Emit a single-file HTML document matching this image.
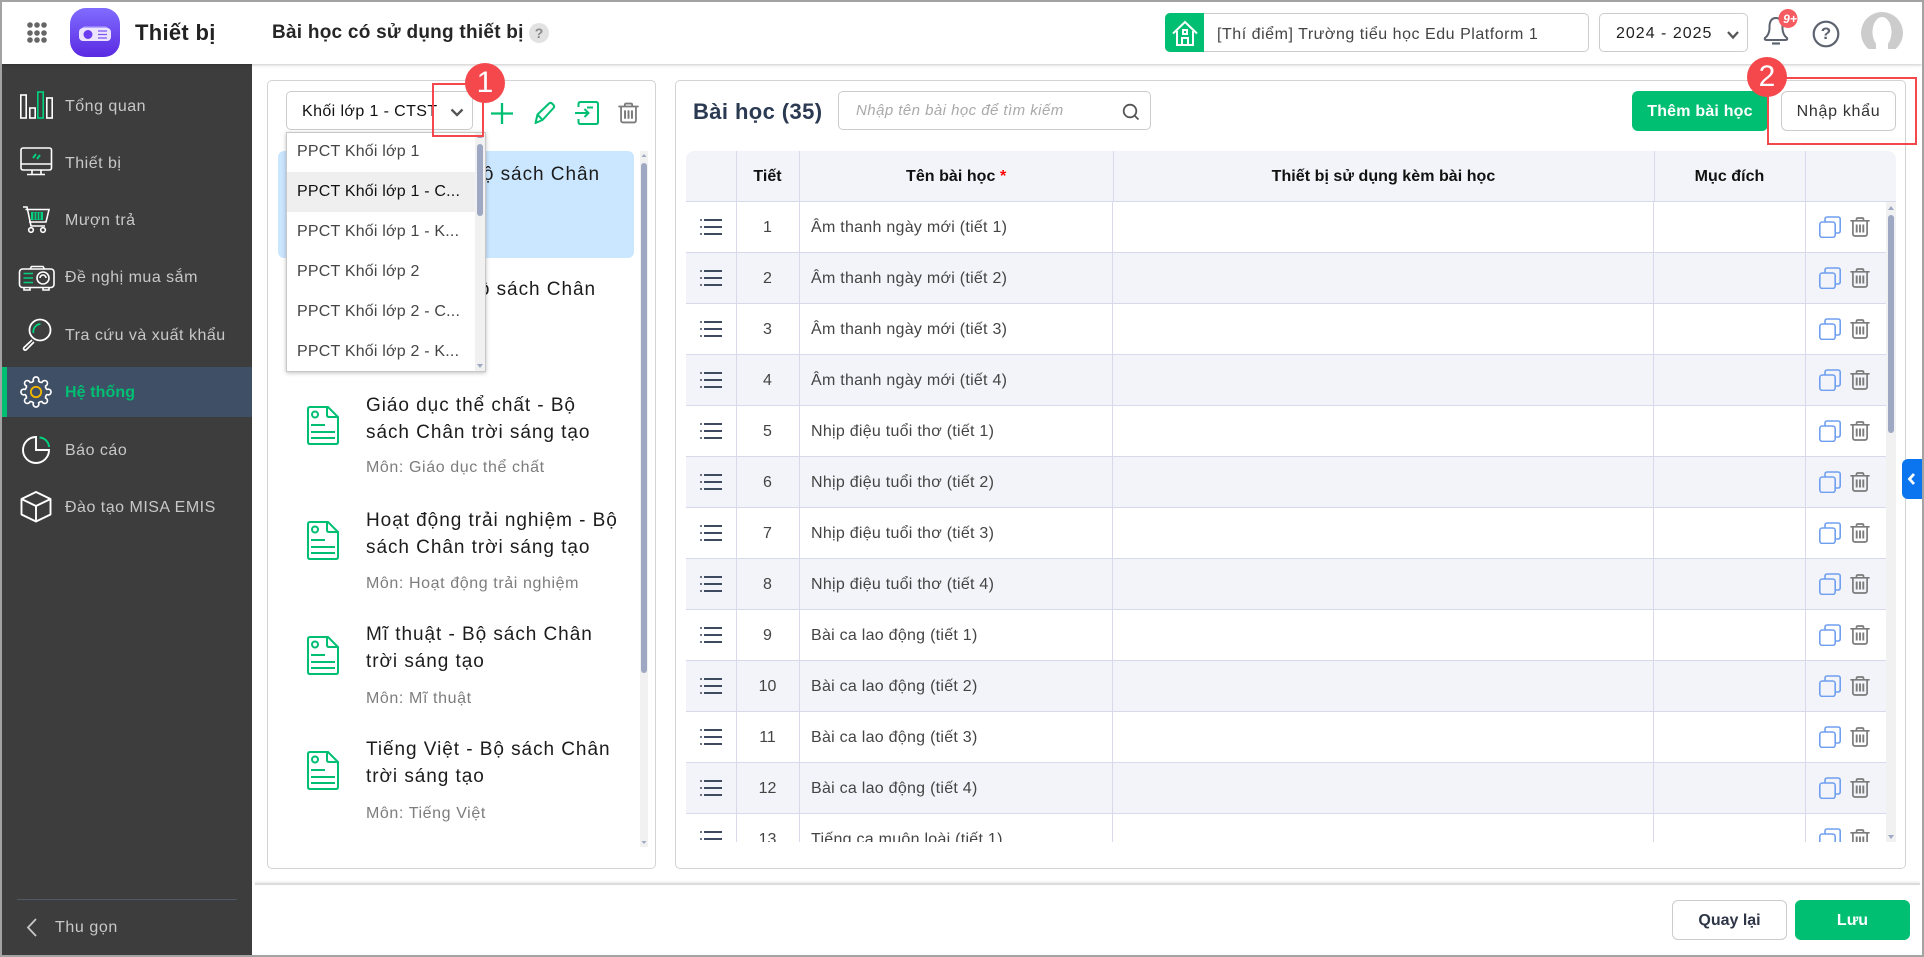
<!DOCTYPE html>
<html lang="vi"><head><meta charset="utf-8"><title>Thiết bị</title>
<style>
html,body{margin:0;padding:0;width:1924px;height:957px;overflow:hidden;background:#fff;font-family:"Liberation Sans","Noto Sans CJK SC",sans-serif;color:#333}
.a{position:absolute}
.t{position:absolute;white-space:nowrap;line-height:20px;font-size:16px}
svg{position:absolute;overflow:visible}
.side{color:#c8c8c8;letter-spacing:.5px;left:65px}
.tt{left:366px;font-size:19px;letter-spacing:.95px;color:#1c1c1c;line-height:24px}
.mon{left:366px;color:#7d7d7d;letter-spacing:.6px}
.dd{left:297px;letter-spacing:.2px;color:#444}
.btn{position:absolute;box-sizing:border-box;border-radius:6px;text-align:center;font-size:16px}
.row{position:absolute;left:0;width:1200px;height:51px;box-sizing:border-box;border-bottom:1.5px solid #d8daec}
.row.e{background:#f3f4f9}
.row .n{position:absolute;left:50px;width:63px;text-align:center;top:16px;line-height:20px;font-size:16px;color:#444}
.row .m{position:absolute;left:125px;top:16px;line-height:20px;font-size:16px;letter-spacing:.27px;color:#444;white-space:nowrap}
.th{position:absolute;top:167px;line-height:20px;font-size:16px;font-weight:bold;color:#111;white-space:nowrap;letter-spacing:.05px;text-align:center}
.v{position:absolute;width:1px;background:#d8daec}
</style></head>
<body>
<svg width="0" height="0" style="position:absolute">
<defs>
<symbol id="trash" viewBox="0 0 20 20"><g fill="none" stroke="#7b7b7b" stroke-width="1.7" stroke-linecap="round"><path d="M1 3.8H19"/><path d="M6.5 3.5V2.2Q6.5 1 7.7 1H12.300Q13.500 1 13.500 2.200V3.500"/><path d="M2.900 4.500V16.800Q2.900 19 5.100 19H14.900Q17.100 19 17.100 16.800V4.500"/><path d="M6.700 7.500V15.500M10 7.500V15.500M13.300 7.500V15.500" stroke-linecap="butt" stroke-width="1.900"/></g></symbol>
<symbol id="copy" viewBox="0 0 22 22"><g fill="none" stroke="#6f9ff0" stroke-width="1.600"><rect x=".8" y="6" width="15.400" height="15.400" rx="2.500"/><path d="M6 5.500V3.200Q6 1 8.200 1H19Q21.200 1 21.200 3.200V14.800Q21.200 17 19 17H16.800"/></g></symbol>
<symbol id="list" viewBox="0 0 22 16"><g fill="#3e4a5f"><rect x="4" y="0" width="18" height="2"/><rect x="4" y="7" width="18" height="2"/><rect x="4" y="14" width="18" height="2"/><circle cx="1" cy="1" r="1"/><circle cx="1" cy="8" r="1"/><circle cx="1" cy="15" r="1"/></g></symbol>
<symbol id="doc" viewBox="0 0 32 39"><g fill="none" stroke="#00bf72" stroke-width="2"><path d="M3 1H21L31 11V36Q31 38 29 38H3Q1 38 1 36V3Q1 1 3 1Z"/><path d="M20 1V9Q20 11 22 11H31"/><circle cx="8" cy="8.500" r="3"/><path d="M4 19H18M4 26H28M4 32H28"/></g></symbol>
</defs>
</svg>

<!-- Header -->
<div class="a" style="left:2px;top:2px;width:1920px;height:62px;background:#fff;box-shadow:0 1px 3px rgba(0,0,0,.22);z-index:2"></div>
<div class="a" style="left:70px;top:8px;width:50px;height:49px;border-radius:16px;background:linear-gradient(180deg,#806cff,#5a2ae2);z-index:3"></div>
<svg style="left:0;top:0;z-index:4" width="130" height="64">
<g fill="#666"><circle cx="30" cy="25" r="2.800"/><circle cx="37" cy="25" r="2.800"/><circle cx="44" cy="25" r="2.800"/><circle cx="30" cy="33" r="2.800"/><circle cx="37" cy="33" r="2.800"/><circle cx="44" cy="33" r="2.800"/><circle cx="30" cy="40" r="2.800"/><circle cx="37" cy="40" r="2.800"/><circle cx="44" cy="40" r="2.800"/></g>
<rect x="79" y="28" width="32" height="13" rx="4" fill="#ece4ff"/><path d="M84 26.500H106L108 28H82Z" fill="#b9a8ff"/><circle cx="88" cy="34.500" r="4.500" fill="#6a3df0"/><path d="M98 31H107M98 34.500H107M98 38H107" stroke="#7a55f0" stroke-width="1.300"/>
</svg>
<div class="t" style="left:135px;top:23px;font-size:22px;font-weight:bold;letter-spacing:.3px;color:#222;z-index:4">Thiết bị</div>
<div class="t" style="left:272px;top:23px;font-size:19px;font-weight:bold;letter-spacing:.25px;color:#262626;z-index:4">Bài học có sử dụng thiết bị</div>
<div class="a" style="left:529px;top:23px;width:20px;height:20px;border-radius:50%;background:#e2e2e2;color:#8a8a8a;text-align:center;line-height:20px;font-size:14px;font-weight:bold;z-index:4">?</div>

<div class="a" style="left:1165px;top:13px;width:424px;height:39px;box-sizing:border-box;border:1px solid #ccc;border-radius:5px;z-index:4"></div>
<div class="a" style="left:1165px;top:13px;width:39px;height:39px;background:#00bf72;border-radius:5px 0 0 5px;z-index:4"></div>
<svg style="left:1165px;top:13px;z-index:5" width="39" height="39"><g fill="none" stroke="#fff" stroke-width="2"><path d="M8 20.500L20 9L32 20.500"/><path d="M12 18V32H28V18"/><path d="M17 32V25H23V32"/><rect x="18" y="17" width="4" height="4"/></g></svg>
<div class="t" style="left:1217px;top:25px;letter-spacing:.53px;color:#444;z-index:5">[Thí điểm] Trường tiểu học Edu Platform 1</div>
<div class="a" style="left:1599px;top:13px;width:149px;height:39px;box-sizing:border-box;border:1px solid #ccc;border-radius:5px;z-index:4"></div>
<div class="t" style="left:1616px;top:24px;letter-spacing:1px;color:#222;z-index:5">2024 - 2025</div>
<svg style="left:1720px;top:25px;z-index:5" width="26" height="20"><path d="M8 7L13 12.500L18 7" fill="none" stroke="#555" stroke-width="2.300"/></svg>

<svg style="left:1755px;top:5px;z-index:5" width="165" height="55">
<g fill="none" stroke="#5d6470" stroke-width="2"><path d="M10 33Q14 30 14.500 24V21Q15 13 21 13Q27 13 27.500 21V24Q28 30 32 33Q33 35 30 35H12Q9 35 10 33Z"/><path d="M17 38.500H25" stroke-width="2.200"/></g>
<circle cx="33" cy="13.500" r="9.500" fill="#f55b60"/>
<circle cx="71" cy="29" r="12.300" fill="none" stroke="#5d6470" stroke-width="2.200"/>
<circle cx="127" cy="28" r="21" fill="#ccc"/>
<ellipse cx="127" cy="27" rx="9.500" ry="15" fill="#fff"/>
<rect x="121" y="30" width="12" height="16" fill="#fff"/>
<rect x="104" y="44" width="46" height="8" fill="#fff"/>
</svg>
<div class="t" style="left:1780px;top:9px;width:20px;text-align:center;font-size:12px;font-weight:bold;font-style:italic;color:#fff;z-index:6">9+</div>
<div class="t" style="left:1816px;top:24px;width:20px;text-align:center;font-size:17px;font-weight:bold;color:#5d6470;z-index:6">?</div>

<!-- Sidebar -->
<div class="a" style="left:2px;top:64px;width:250px;height:891px;background:#3d3d3d"></div>
<div class="a" style="left:2px;top:367px;width:250px;height:50px;background:#3f4f65"></div>
<div class="a" style="left:2px;top:367px;width:5px;height:50px;background:#00bf72"></div>
<div class="t side" style="top:97px">Tổng quan</div>
<div class="t side" style="top:154px">Thiết bị</div>
<div class="t side" style="top:211px">Mượn trả</div>
<div class="t side" style="top:268px">Đề nghị mua sắm</div>
<div class="t side" style="top:326px">Tra cứu và xuất khẩu</div>
<div class="t side" style="top:383px;color:#00bf72;font-weight:bold;letter-spacing:.1px">Hệ thống</div>
<div class="t side" style="top:441px">Báo cáo</div>
<div class="t side" style="top:498px">Đào tạo MISA EMIS</div>
<div class="a" style="left:17px;top:899px;width:220px;height:1px;background:#50586a"></div>
<div class="t side" style="left:55px;top:918px;letter-spacing:.6px">Thu gọn</div>

<svg style="left:0;top:0" width="252" height="957">
<g fill="none" stroke="#fff" stroke-width="1.600">
<rect x="20.800" y="95" width="5.400" height="23"/><rect x="29.800" y="108" width="5.400" height="10"/><rect x="46.800" y="98" width="5.400" height="20"/>
<rect x="37.800" y="92" width="5.400" height="26" stroke="#00d27e"/>
<rect x="21" y="148" width="30.500" height="22" rx="2"/><path d="M21 164H51.500M32 170V174M41 170V174M27 174.500H45"/>
<path d="M33 158L36 154M37 159L40 155" stroke="#00d27e" stroke-width="2"/>
<path d="M23 207H27L31 226H45M25.500 209.500H49L46 222H29"/>
<rect x="31" y="212" width="12" height="8" fill="#00d27e" stroke="none"/><path d="M34 212.500V219.500M37 212.500V219.500M40 212.500V219.500" stroke="#3d3d3d" stroke-width="1.300"/>
<circle cx="31" cy="230" r="2.300"/><circle cx="43" cy="230" r="2.300"/>
<rect x="19.500" y="269" width="34.500" height="18.500" rx="3"/><path d="M30 269L31.500 266.500H43L44.500 269M24 288V290H30V288M43 288V290H49V288"/>
<path d="M23.500 273.500H33M23.500 278H33M23.500 282.500H33" stroke="#00d27e" stroke-width="1.500"/>
<circle cx="43" cy="278" r="6"/><path d="M40 278A3 3 0 0 1 46 278" />
<circle cx="40" cy="330" r="10.500" stroke-width="1.800"/><path d="M33.500 333A7.500 7.500 0 0 1 40.500 324" stroke="#00d27e" stroke-width="1.800"/>
<path d="M32 340L24 347.500Q23 349 24.500 350Q25.500 350.500 26.500 349.500L34 342" stroke-width="1.700"/>
<g transform="translate(36 392) scale(.94)" stroke-width="1.700"><path d="M11.690 -2.700A3 3 0 1 1 11.690 2.700A4 4 0 0 0 10.180 6.360A3 3 0 1 1 6.360 10.180A4 4 0 0 0 2.700 11.690A3 3 0 1 1 -2.700 11.690A4 4 0 0 0 -6.360 10.180A3 3 0 1 1 -10.180 6.360A4 4 0 0 0 -11.690 2.700A3 3 0 1 1 -11.690 -2.700A4 4 0 0 0 -10.180 -6.360A3 3 0 1 1 -6.360 -10.180A4 4 0 0 0 -2.700 -11.690A3 3 0 1 1 2.700 -11.690A4 4 0 0 0 6.360 -10.180A3 3 0 1 1 10.180 -6.360A4 4 0 0 0 11.690 -2.700Z"/><circle r="5.500" stroke="#f0b400" stroke-width="2"/></g>
<path d="M36 437V450H49A13 13 0 1 1 36 437Z" stroke-width="1.900"/><path d="M39.500 437.500A10 10 0 0 1 49 447" stroke="#00d27e" stroke-width="1.900"/>
<path d="M36 492L50.500 499V514.500L36 521.500L21.500 514.500V499ZM21.500 499L36 506L50.500 499M36 506V521.500" stroke-width="1.900" stroke-linejoin="round"/>
<path d="M36 919L28 927.500L36 936" stroke="#c8c8c8" stroke-width="1.800"/>
</g>
</svg>

<!-- Left panel -->
<div class="a" style="left:267px;top:80px;width:389px;height:789px;box-sizing:border-box;border:1px solid #d3d3d3;border-radius:5px"></div>
<div class="a" style="left:286px;top:91px;width:187px;height:39px;box-sizing:border-box;border:1px solid #ccc;border-radius:5px"></div>
<div class="t" style="left:302px;top:102px;letter-spacing:.4px;color:#111">Khối lớp 1 - CTST</div>
<svg style="left:445px;top:103px" width="24" height="20"><path d="M6.500 6.500L12 12L17.500 6.500" fill="none" stroke="#555" stroke-width="2.300"/></svg>
<svg style="left:0;top:0" width="660" height="140">
<path d="M502 103V124M491 113.500H513" stroke="#00bf72" stroke-width="2.300" fill="none"/>
<path d="M535.500 123L537.500 114.500L549 103.500Q550.500 102.200 552 103.500L553.500 105Q554.800 106.500 553.500 108L542.500 120ZM537.500 114.500L542.500 120" fill="none" stroke="#00bf72" stroke-width="2" stroke-linejoin="round"/>
<path d="M578.500 107V104Q578.500 102 580.500 102H596Q598 102 598 104V122Q598 124 596 124H580.500Q578.500 124 578.500 122V119M575 113H588.500M584.500 109L588.500 113L584.500 117M587 107.500H593" fill="none" stroke="#00bf72" stroke-width="2"/>
</svg>
<svg style="left:618px;top:102px" width="21" height="22"><use href="#trash" width="21" height="22"/></svg>

<div class="a" style="left:278px;top:151px;width:356px;height:107px;background:#cbe6ff;border-radius:6px"></div>
<div class="t tt" style="left:auto;right:1324px;top:163px">Âm nhạc - Bộ sách Chân</div>
<div class="t tt" style="top:190px">trời sáng tạo</div>
<div class="t mon" style="top:227px">Môn: Âm nhạc</div>
<div class="t tt" style="left:auto;right:1328px;top:278px">Đạo đức - Bộ sách Chân</div>
<div class="t tt" style="top:305px">trời sáng tạo</div>
<div class="t mon" style="top:342px">Môn: Đạo đức</div>

<svg style="left:307px;top:406px" width="32" height="39"><use href="#doc" width="32" height="39"/></svg>
<div class="t tt" style="top:394px">Giáo dục thể chất - Bộ</div>
<div class="t tt" style="top:421px">sách Chân trời sáng tạo</div>
<div class="t mon" style="top:458px">Môn: Giáo dục thể chất</div>

<svg style="left:307px;top:521px" width="32" height="39"><use href="#doc" width="32" height="39"/></svg>
<div class="t tt" style="top:509px">Hoạt động trải nghiệm - Bộ</div>
<div class="t tt" style="top:536px">sách Chân trời sáng tạo</div>
<div class="t mon" style="top:574px">Môn: Hoạt động trải nghiệm</div>

<svg style="left:307px;top:636px" width="32" height="39"><use href="#doc" width="32" height="39"/></svg>
<div class="t tt" style="top:623px">Mĩ thuật - Bộ sách Chân</div>
<div class="t tt" style="top:650px">trời sáng tạo</div>
<div class="t mon" style="top:689px">Môn: Mĩ thuật</div>

<svg style="left:307px;top:751px" width="32" height="39"><use href="#doc" width="32" height="39"/></svg>
<div class="t tt" style="top:738px">Tiếng Việt - Bộ sách Chân</div>
<div class="t tt" style="top:765px">trời sáng tạo</div>
<div class="t mon" style="top:804px">Môn: Tiếng Việt</div>

<div class="a" style="left:640px;top:151px;width:8px;height:696px;background:#f1f1f1"></div>
<div class="a" style="left:641px;top:163px;width:6px;height:510px;background:#9ea8c2;border-radius:3px"></div>
<svg style="left:640px;top:151px" width="8" height="696"><path d="M1.500 6L4 3L6.500 6ZM1.500 690L4 693L6.500 690Z" fill="#9ea8c2"/></svg>

<!-- Right panel -->
<div class="a" style="left:675px;top:80px;width:1231px;height:789px;box-sizing:border-box;border:1px solid #d3d3d3;border-radius:5px"></div>
<div class="t" style="left:693px;top:102px;font-size:22px;font-weight:bold;letter-spacing:.4px;color:#2b3a52">Bài học (35)</div>
<div class="a" style="left:838px;top:91px;width:313px;height:39px;box-sizing:border-box;border:1px solid #ccc;border-radius:5px"></div>
<div class="t" style="left:856px;top:101px;font-size:15px;font-style:italic;letter-spacing:.45px;color:#a9a9a9">Nhập tên bài học để tìm kiếm</div>
<svg style="left:1122px;top:103px" width="18" height="18"><circle cx="8" cy="8" r="6.300" fill="none" stroke="#555" stroke-width="1.800"/><path d="M12.500 12.500L16.500 16.500" stroke="#555" stroke-width="1.800"/></svg>

<div class="btn" style="left:1632px;top:91px;width:136px;height:40px;background:#00bf72;color:#fff;font-weight:bold;line-height:41px;letter-spacing:.2px">Thêm bài học</div>
<div class="btn" style="left:1781px;top:91px;width:115px;height:40px;border:1px solid #ccc;line-height:39px;letter-spacing:.7px;color:#333">Nhập khẩu</div>

<!-- Table -->
<div class="a" style="left:686px;top:151px;width:1210px;height:51px;background:#f3f4f9;border-radius:8px 8px 0 0;box-sizing:border-box;border-bottom:1.5px solid #d8daec"></div>
<div class="v" style="left:736px;top:151px;height:51px"></div>
<div class="v" style="left:799px;top:151px;height:51px"></div>
<div class="v" style="left:1113px;top:151px;height:51px"></div>
<div class="v" style="left:1654px;top:151px;height:51px"></div>
<div class="v" style="left:1805px;top:151px;height:51px"></div>
<div class="th" style="left:736px;width:63px">Tiết</div>
<div class="th" style="left:906px;text-align:left">Tên bài học <span style="color:#f00">*</span></div>
<div class="th" style="left:1113px;width:541px">Thiết bị sử dụng kèm bài học</div>
<div class="th" style="left:1654px;width:151px">Mục đích</div>

<div class="a" style="left:686px;top:202px;width:1200px;height:640px;overflow:hidden">
<div class="row" style="top:0"><div class="n">1</div><div class="m">Âm thanh ngày mới (tiết 1)</div></div>
<div class="row e" style="top:51px"><div class="n">2</div><div class="m">Âm thanh ngày mới (tiết 2)</div></div>
<div class="row" style="top:102px"><div class="n">3</div><div class="m">Âm thanh ngày mới (tiết 3)</div></div>
<div class="row e" style="top:153px"><div class="n">4</div><div class="m">Âm thanh ngày mới (tiết 4)</div></div>
<div class="row" style="top:204px"><div class="n">5</div><div class="m">Nhịp điệu tuổi thơ (tiết 1)</div></div>
<div class="row e" style="top:255px"><div class="n">6</div><div class="m">Nhịp điệu tuổi thơ (tiết 2)</div></div>
<div class="row" style="top:306px"><div class="n">7</div><div class="m">Nhịp điệu tuổi thơ (tiết 3)</div></div>
<div class="row e" style="top:357px"><div class="n">8</div><div class="m">Nhịp điệu tuổi thơ (tiết 4)</div></div>
<div class="row" style="top:408px"><div class="n">9</div><div class="m">Bài ca lao động (tiết 1)</div></div>
<div class="row e" style="top:459px"><div class="n">10</div><div class="m">Bài ca lao động (tiết 2)</div></div>
<div class="row" style="top:510px"><div class="n">11</div><div class="m">Bài ca lao động (tiết 3)</div></div>
<div class="row e" style="top:561px"><div class="n">12</div><div class="m">Bài ca lao động (tiết 4)</div></div>
<div class="row" style="top:612px"><div class="n">13</div><div class="m">Tiếng ca muôn loài (tiết 1)</div></div>
<div class="v" style="left:50px;top:0;height:640px"></div>
<div class="v" style="left:113px;top:0;height:640px"></div>
<div class="v" style="left:426px;top:0;height:640px"></div>
<div class="v" style="left:967px;top:0;height:640px"></div>
<div class="v" style="left:1119px;top:0;height:640px"></div>
<svg style="left:0;top:-1px;overflow:hidden" width="1200" height="641">
<use href="#list" x="14" y="18" width="22" height="16"/><use href="#copy" x="1133" y="15" width="22" height="22"/><use href="#trash" x="1164" y="16" width="20" height="20"/>
<use href="#list" x="14" y="69" width="22" height="16"/><use href="#copy" x="1133" y="66" width="22" height="22"/><use href="#trash" x="1164" y="67" width="20" height="20"/>
<use href="#list" x="14" y="120" width="22" height="16"/><use href="#copy" x="1133" y="117" width="22" height="22"/><use href="#trash" x="1164" y="118" width="20" height="20"/>
<use href="#list" x="14" y="171" width="22" height="16"/><use href="#copy" x="1133" y="168" width="22" height="22"/><use href="#trash" x="1164" y="169" width="20" height="20"/>
<use href="#list" x="14" y="222" width="22" height="16"/><use href="#copy" x="1133" y="219" width="22" height="22"/><use href="#trash" x="1164" y="220" width="20" height="20"/>
<use href="#list" x="14" y="273" width="22" height="16"/><use href="#copy" x="1133" y="270" width="22" height="22"/><use href="#trash" x="1164" y="271" width="20" height="20"/>
<use href="#list" x="14" y="324" width="22" height="16"/><use href="#copy" x="1133" y="321" width="22" height="22"/><use href="#trash" x="1164" y="322" width="20" height="20"/>
<use href="#list" x="14" y="375" width="22" height="16"/><use href="#copy" x="1133" y="372" width="22" height="22"/><use href="#trash" x="1164" y="373" width="20" height="20"/>
<use href="#list" x="14" y="426" width="22" height="16"/><use href="#copy" x="1133" y="423" width="22" height="22"/><use href="#trash" x="1164" y="424" width="20" height="20"/>
<use href="#list" x="14" y="477" width="22" height="16"/><use href="#copy" x="1133" y="474" width="22" height="22"/><use href="#trash" x="1164" y="475" width="20" height="20"/>
<use href="#list" x="14" y="528" width="22" height="16"/><use href="#copy" x="1133" y="525" width="22" height="22"/><use href="#trash" x="1164" y="526" width="20" height="20"/>
<use href="#list" x="14" y="579" width="22" height="16"/><use href="#copy" x="1133" y="576" width="22" height="22"/><use href="#trash" x="1164" y="577" width="20" height="20"/>
<use href="#list" x="14" y="630" width="22" height="16"/><use href="#copy" x="1133" y="627" width="22" height="22"/><use href="#trash" x="1164" y="628" width="20" height="20"/>
</svg>
</div>
<div class="a" style="left:1886px;top:202px;width:10px;height:640px;background:#f1f1f1"></div>
<div class="a" style="left:1888px;top:215px;width:6px;height:218px;background:#9ea8c2;border-radius:3px"></div>
<svg style="left:1886px;top:201px" width="10" height="641"><path d="M2 9L5 5L8 9ZM2 634L5 638L8 634Z" fill="#9ea8c2"/></svg>

<!-- Collapse tab -->
<div class="a" style="left:1902px;top:459px;width:20px;height:40px;background:#0a75ee;border-radius:6px 0 0 6px"></div>
<svg style="left:1902px;top:459px" width="20" height="40"><path d="M12 15L7.500 20L12 25" fill="none" stroke="#fff" stroke-width="2.800"/></svg>

<!-- Footer -->
<div class="a" style="left:255px;top:883px;width:1665px;height:2px;background:#dcdcdc;box-shadow:0 -1px 2px rgba(0,0,0,.1)"></div>
<div class="btn" style="left:1672px;top:900px;width:115px;height:40px;border:1px solid #ccc;line-height:40px;font-weight:bold;color:#2e3547">Quay lại</div>
<div class="btn" style="left:1795px;top:900px;width:115px;height:40px;background:#00bf72;color:#fff;line-height:42px;font-weight:bold">Lưu</div>

<!-- Dropdown -->
<div class="a" style="left:286px;top:132px;width:200px;height:240px;box-sizing:border-box;background:#fff;border:1px solid #c8c8c8;box-shadow:0 1px 4px rgba(0,0,0,.25);z-index:7"></div>
<div class="a" style="left:287px;top:172px;width:188px;height:40px;background:#efefef;z-index:7"></div>
<div class="a" style="left:475px;top:133px;width:10px;height:238px;background:#f1f1f1;z-index:7"></div>
<div class="a" style="left:477px;top:144px;width:6px;height:72px;background:#9ea8c2;border-radius:3px;z-index:8"></div>
<svg style="left:475px;top:133px;z-index:8" width="10" height="238"><path d="M2 5L5 2L8 5ZM2 231L5 235L8 231Z" fill="#9ea8c2"/></svg>
<div class="t dd" style="top:142px;z-index:8">PPCT Khối lớp 1</div>
<div class="t dd" style="top:182px;color:#111;z-index:8">PPCT Khối lớp 1 - C...</div>
<div class="t dd" style="top:222px;z-index:8">PPCT Khối lớp 1 - K...</div>
<div class="t dd" style="top:262px;z-index:8">PPCT Khối lớp 2</div>
<div class="t dd" style="top:302px;z-index:8">PPCT Khối lớp 2 - C...</div>
<div class="t dd" style="top:342px;z-index:8">PPCT Khối lớp 2 - K...</div>

<!-- Annotations -->
<div class="a" style="left:432px;top:83px;width:52px;height:54px;box-sizing:border-box;border:2px solid #f4484c;z-index:9"></div>
<div class="a" style="left:465px;top:63px;width:40px;height:40px;border-radius:50%;background:#f4484c;color:#fff;text-align:center;line-height:40px;font-size:30px;z-index:10">1</div>
<div class="a" style="left:1767px;top:77px;width:150px;height:68px;box-sizing:border-box;border:2px solid #f4484c;z-index:9"></div>
<div class="a" style="left:1747px;top:57px;width:40px;height:40px;border-radius:50%;background:#f4484c;color:#fff;text-align:center;line-height:40px;font-size:30px;z-index:10">2</div>

<!-- Frame -->
<div class="a" style="left:0;top:0;width:1924px;height:957px;box-sizing:border-box;border:2px solid #a3a3a3;z-index:20;pointer-events:none"></div>
</body></html>
